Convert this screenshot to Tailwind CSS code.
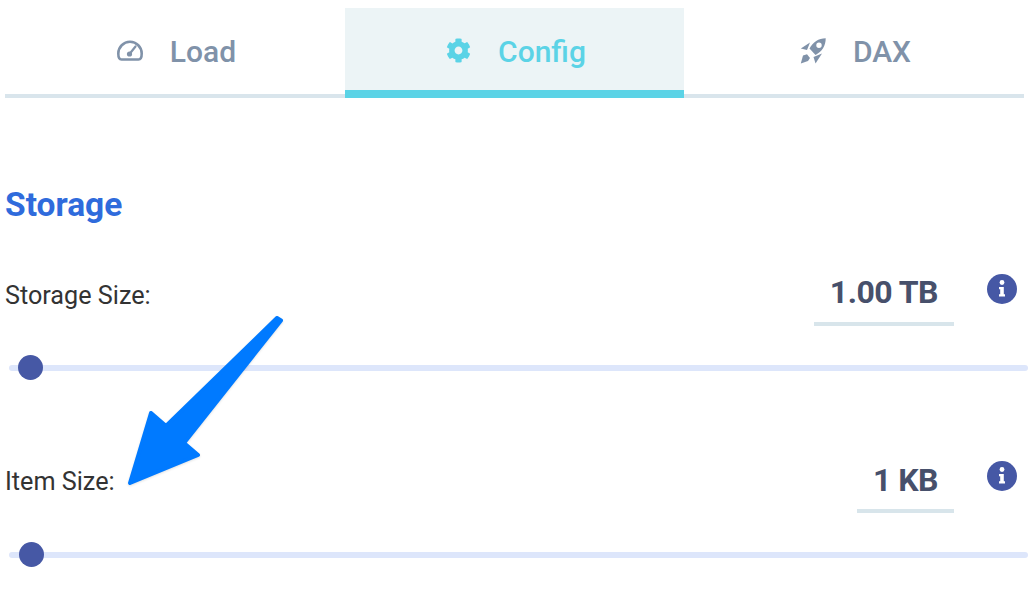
<!DOCTYPE html>
<html><head><meta charset="utf-8"><script src="https://cdn.jsdelivr.net/npm/@tailwindcss/browser@4"></script></head>
<body class="bg-white">
<div class="relative w-[1034px] h-[600px] overflow-hidden bg-white pt-[8px] pl-[5px] pr-[10px] font-['Roboto',sans-serif]">
  <div class="grid grid-cols-[340px_339px_340px] h-[90px] text-[#8092a9] text-[30px] font-medium">
    <div class="flex items-center justify-center gap-[27px] border-b-4 border-[#d9e5ec] pt-[1px] pl-[3px]">
      <svg class="w-[26px] h-[21px] -mt-[2px]" viewBox="0 0 26 21" fill="none"><path d="M4.5 19.5H21.5C23.5 19.5 24.7 17 24.7 13.5A11.7 11.7 0 0 0 1.3 13.5C1.3 17 2.5 19.5 4.5 19.5Z" stroke="#8092a9" stroke-width="2.6"/><circle cx="12.5" cy="14" r="2.6" fill="#8092a9"/><path d="M12.5 14L18.5 6.5" stroke="#8092a9" stroke-width="2.2" stroke-linecap="round"/></svg>
      <span>Load</span>
    </div>
    <div class="flex items-center justify-center gap-[27px] bg-[#ecf4f6] border-b-8 border-[#5bd3e6] text-[#5bd3e6] pt-[5px] pl-[3px]">
      <svg class="w-[25px] h-[25px] -mt-[2px]" viewBox="0 0 512 512" fill="#5bd3e6"><path d="M487.4 315.7l-42.6-24.6c4.3-23.2 4.3-47 0-70.2l42.6-24.6c4.9-2.8 7.1-8.6 5.5-14-11.1-35.6-30-67.8-54.7-94.6-3.8-4.1-10-5.1-14.8-2.3L380.8 110c-17.9-15.4-38.5-27.3-60.8-35.1V25.8c0-5.6-3.9-10.5-9.4-11.7-36.7-8.2-74.3-7.8-109.2 0-5.5 1.2-9.4 6.1-9.4 11.7V75c-22.2 7.9-42.8 19.8-60.8 35.1L88.7 85.5c-4.9-2.8-11-1.9-14.8 2.3-24.7 26.7-43.6 58.9-54.7 94.6-1.7 5.4.6 11.2 5.5 14L67.3 221c-4.3 23.2-4.3 47 0 70.2l-42.6 24.6c-4.9 2.8-7.1 8.6-5.5 14 11.1 35.6 30 67.8 54.7 94.6 3.8 4.1 10 5.1 14.8 2.3l42.6-24.6c17.9 15.4 38.5 27.3 60.8 35.1v49.2c0 5.6 3.9 10.5 9.4 11.7 36.7 8.2 74.3 7.8 109.2 0 5.5-1.2 9.4-6.1 9.4-11.7v-49.2c22.2-7.9 42.8-19.8 60.8-35.1l42.6 24.6c4.9 2.8 11 1.9 14.8-2.3 24.7-26.7 43.6-58.9 54.7-94.6 1.5-5.5-.7-11.3-5.6-14.1zM256 336c-44.1 0-80-35.9-80-80s35.9-80 80-80 80 35.9 80 80-35.9 80-80 80z"/></svg>
      <span>Config</span>
    </div>
    <div class="flex items-center justify-center gap-[27px] border-b-4 border-[#d9e5ec] pt-[1px] pl-[3px]">
      <svg class="w-[26px] h-[26px] -mt-[2px]" viewBox="0 0 26 26" fill="#8092a9" fill-rule="evenodd"><path d="M25.7 .3C18.5 .5 13 4 9.5 10.5L15.5 17C22 13.5 25.8 8 25.7 .3ZM19 4.5A2.7 2.7 0 1 1 19 9.9A2.7 2.7 0 1 1 19 4.5Z"/><path d="M.8 10.5L10 4.5L7 12Z"/><path d="M.8 25.5L3 17.5L7 16.2L10 20L8 23Z"/><path d="M13.5 19L22 15.5L15.5 25.5Z"/></svg>
      <span>DAX</span>
    </div>
  </div>
  <h2 class="mt-[87px] text-[33.5px] leading-[40px] font-bold text-[#2f6bdc]">Storage</h2>

  <div class="mt-[45px] flex items-start justify-between h-[77px] pr-[7px]">
    <span class="text-[25.2px] leading-[30px] mt-[11px] text-[#333]">Storage Size:</span>
    <div class="flex items-start">
      <div class="w-[140px] h-[56px] border-b-4 border-[#d8e5eb] text-right pr-[16px] text-[32px] leading-[38px] font-bold tracking-[-0.5px] text-[#47506b] pt-[3px]">1.00 TB</div>
      <svg class="w-[30px] h-[30px] ml-[33px] mt-[4px]" viewBox="0 0 30 30"><circle cx="15" cy="15" r="15" fill="#4658a5"/><circle cx="15" cy="8.5" r="2.4" fill="#fff"/><path d="M12 13H16.8V20.2H18V22.5H12V20.2H13.2V15.3H12Z" fill="#fff"/></svg>
    </div>
  </div>
  <div class="relative mt-[18px] ml-[4px] mr-[-4px] h-[6px] rounded-full bg-[#dde6fb]">
    <div class="absolute left-[9px] top-[-10px] w-[25px] h-[25px] rounded-full bg-[#4658a5]"></div>
  </div>

  <div class="mt-[89px] flex items-start justify-between h-[77px] pr-[7px]">
    <span class="text-[25.2px] leading-[30px] mt-[7px] text-[#333]">Item Size:</span>
    <div class="flex items-start">
      <div class="w-[97px] h-[53px] border-b-4 border-[#d8e5eb] text-right pr-[16px] text-[32px] leading-[38px] font-bold tracking-[-0.5px] text-[#47506b] pt-[1px]">1 KB</div>
      <svg class="w-[30px] h-[30px] ml-[33px] mt-[1px]" viewBox="0 0 30 30"><circle cx="15" cy="15" r="15" fill="#4658a5"/><circle cx="15" cy="8.5" r="2.4" fill="#fff"/><path d="M12 13H16.8V20.2H18V22.5H12V20.2H13.2V15.3H12Z" fill="#fff"/></svg>
    </div>
  </div>
  <div class="relative mt-[15px] ml-[4px] mr-[-4px] h-[6px] rounded-full bg-[#dde6fb]">
    <div class="absolute left-[10px] top-[-10px] w-[25px] h-[25px] rounded-full bg-[#4658a5]"></div>
  </div>

  <svg class="absolute left-0 top-0 w-[1034px] h-[600px] pointer-events-none drop-shadow-[0_1px_1px_rgba(0,0,0,0.12)]" viewBox="0 0 1034 600"><path d="M277 318L281 320.500L184 443L198 455L130 483L151 413L166 426Z" fill="#007aff" stroke="#007aff" stroke-width="4" stroke-linejoin="round"/></svg>
</div>
</body></html>
